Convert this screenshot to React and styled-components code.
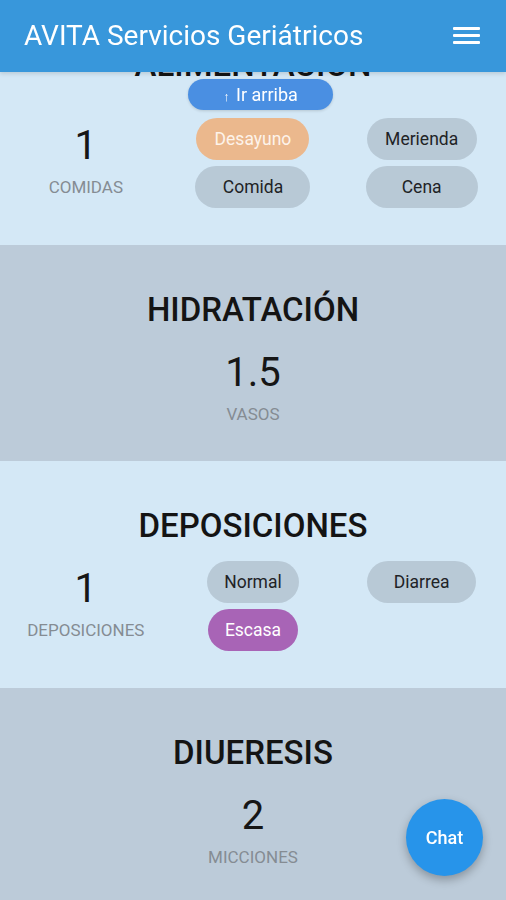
import React from 'react'
import styled, {createGlobalStyle} from 'styled-components';

const GlobalStyle = createGlobalStyle`
    body{
        margin: 0;
        font-family: Roboto, "Noto Sans", sans-serif;
        background: #d4e8f6;
        overflow: hidden;
    }
`

const sections = [
    {
        title: 'ALIMENTACIÓN', value: '1', unit: 'COMIDAS', tone: 'light', gap: 34,
        chips: [
            {label: 'Desayuno', min: 113, kind: 'orange'},
            {label: 'Merienda', min: 110},
            {label: 'Comida', min: 115},
            {label: 'Cena', min: 112},
        ],
    },
    {title: 'HIDRATACIÓN', value: '1.5', unit: 'VASOS', tone: 'dark'},
    {
        title: 'DEPOSICIONES', value: '1', unit: 'DEPOSICIONES', tone: 'light', gap: 16,
        chips: [
            {label: 'Normal'},
            {label: 'Diarrea', min: 109},
            {label: 'Escasa', kind: 'purple'},
        ],
    },
    {title: 'DIUERESIS', value: '2', unit: 'MICCIONES', tone: 'dark'},
];

function App() {
    return (
        <>
            <GlobalStyle />
            <Header>
                <h1>AVITA Servicios Geriátricos</h1>
                <Burger aria-label="menu">
                    <span /><span /><span />
                </Burger>
            </Header>
            <UpButton><small>↑</small> Ir arriba</UpButton>
            <main>
                {sections.map((s) => (
                    <Section key={s.title} $tone={s.tone}>
                        <Title>{s.title}</Title>
                        {s.chips ? (
                            <Row $gap={s.gap}>
                                <Stat $span>
                                    <Value>{s.value}</Value>
                                    <Unit>{s.unit}</Unit>
                                </Stat>
                                {s.chips.map((c) => (
                                    <Chip key={c.label} $min={c.min} $kind={c.kind}>{c.label}</Chip>
                                ))}
                            </Row>
                        ) : (
                            <Stat>
                                <Value>{s.value}</Value>
                                <Unit>{s.unit}</Unit>
                            </Stat>
                        )}
                    </Section>
                ))}
            </main>
            <Fab>Chat</Fab>
        </>
    );
}

const Header = styled.header`
    position: fixed;
    top: 0;
    left: 0;
    right: 0;
    z-index: 10;
    height: 72px;
    background: #3897db;
    display: flex;
    align-items: center;
    justify-content: space-between;
    padding: 0 24px;
    box-sizing: border-box;
    box-shadow: 0 2px 4px rgba(0,0,0,0.12);
    h1{
        margin: 0;
        color: white;
        font-size: 28px;
        font-weight: 400;
        margin-top: -2px;
    }
`

const Burger = styled.div`
    display: flex;
    flex-direction: column;
    gap: 4px;
    margin-right: 2px;
    margin-top: -2px;
    span{
        display: block;
        width: 27px;
        height: 3px;
        background: white;
        border-radius: 1px;
    }
`

const UpButton = styled.button`
    position: fixed;
    top: 79px;
    left: 188px;
    z-index: 5;
    width: 145px;
    height: 31px;
    border: none;
    border-radius: 16px;
    background: #4a8fe2;
    color: white;
    font-family: Roboto, sans-serif;
    font-size: 18px;
    padding: 0;
    box-shadow: 0 1px 3px rgba(0,0,0,0.15);
    small{
        font-size: 13px;
        margin-right: 2px;
    }
`

const Section = styled.section`
    background: ${p => p.$tone === 'dark' ? '#bccbd9' : '#d4e8f6'};
    padding: 45px 0 37px;
    display: flex;
    flex-direction: column;
    align-items: center;
`

const Title = styled.h2`
    margin: 0;
    font-size: 33px;
    line-height: 39px;
    font-weight: 500;
    color: #141414;
    + div{
        margin-top: 20px;
    }
`

const Row = styled.div`
    && {
        margin-top: ${p => p.$gap}px;
    }
    width: 100%;
    display: grid;
    grid-template-columns: repeat(3, 1fr);
    row-gap: 6px;
    justify-items: center;
`

const Stat = styled.div`
    display: flex;
    flex-direction: column;
    align-items: center;
    grid-row: ${p => p.$span ? 'span 2' : 'auto'};
    padding-top: ${p => p.$span ? '4px' : '0'};
    margin-left: ${p => p.$span ? '3px' : '0'};
`

const Value = styled.div`
    font-size: 40px;
    line-height: 48px;
    color: #161616;
`

const Unit = styled.div`
    font-size: 17px;
    line-height: 19px;
    margin-top: 8px;
    color: #858c93;
`

const chipColors = {
    orange: ['#ebb88d', '#fdf3ea'],
    purple: ['#a864b6', '#ffffff'],
    plain: ['#b8c9d6', '#1f2326'],
}

const Chip = styled.div`
    height: 42px;
    min-width: ${p => p.$min || 0}px;
    box-sizing: border-box;
    padding: 0 17px;
    border-radius: 21px;
    display: flex;
    align-items: center;
    justify-content: center;
    font-size: 17.5px;
    background: ${p => chipColors[p.$kind || 'plain'][0]};
    color: ${p => chipColors[p.$kind || 'plain'][1]};
`

const Fab = styled.button`
    position: fixed;
    right: 23px;
    bottom: 24px;
    width: 77px;
    height: 77px;
    border-radius: 50%;
    border: none;
    background: #2794ea;
    color: white;
    font-family: Roboto, sans-serif;
    font-size: 18px;
    font-weight: 500;
    box-shadow: 0 4px 10px rgba(0,0,0,0.28);
`

export default App
